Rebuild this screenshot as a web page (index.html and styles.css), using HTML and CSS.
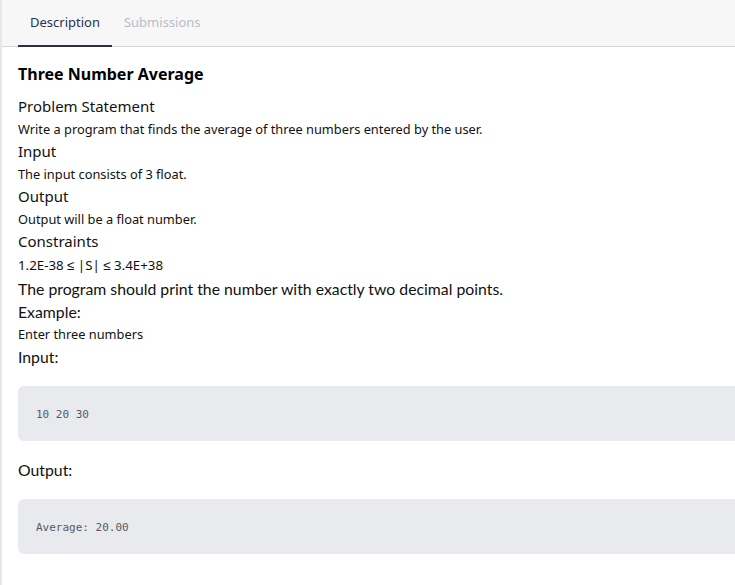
FILE: index.html
```html
<!DOCTYPE html>
<html>
<head>
<meta charset="utf-8">
<link rel="stylesheet" href="styles.css">
</head>
<body>
<div class="panel">
  <div class="tabs">
    <div class="tab active">Description</div>
    <div class="tab">Submissions</div>
  </div>
  <div class="content">
    <h1 class="title">Three Number Average</h1>
    <div class="h">Problem Statement</div>
    <div class="p">Write a program that finds the average of three numbers entered by the user.</div>
    <div class="h">Input</div>
    <div class="p">The input consists of 3 float.</div>
    <div class="h">Output</div>
    <div class="p">Output will be a float number.</div>
    <div class="h">Constraints</div>
    <div class="c">1.2E-38 ≤ |S| ≤ 3.4E+38</div>
    <div class="big">The program should print the number with exactly two decimal points.</div>
    <div class="big">Example:</div>
    <div class="p">Enter three numbers</div>
    <div class="big">Input:</div>
    <pre class="code">10 20 30</pre>
    <div class="big">Output:</div>
    <pre class="code">Average: 20.00</pre>
  </div>
</div>
</body>
</html>
```
FILE: styles.css
```css
html, body {
  margin: 0;
  padding: 0;
  background: #ffffff;
}
body {
  font-family: "Noto Sans", sans-serif;
  color: #111111;
  width: 735px;
  height: 585px;
  overflow: hidden;
}
.panel {
  border-left: 2px solid #e6e6ec;
  min-height: 585px;
  width: 800px;
}
.tabs {
  display: flex;
  height: 47px;
  background: #f7f7f7;
  border-bottom: 1px solid #d3d6db;
  padding-left: 16px;
  box-sizing: border-box;
}
.tab {
  font-family: "Noto Sans", sans-serif;
  font-size: 13px;
  padding: 0 12px 2px;
  display: flex;
  align-items: center;
  color: #b9bdc6;
  box-sizing: border-box;
  border-bottom: 2px solid transparent;
  margin-bottom: -1px;
}
.tab.active {
  color: #2a3350;
  border-bottom-color: #2c2d4a;
}
.content {
  padding: 0 16px;
}
.title {
  font-size: 16px;
  font-weight: 700;
  margin: 0;
  padding-top: 15px;
  line-height: 24px;
  color: #000;
}
.h {
  font-size: 15px;
  line-height: 22.5px;
}
.title + .h {
  margin-top: 9px;
}
.p {
  font-size: 12.8px;
  line-height: 22.5px;
}
.c {
  font-size: 13.3px;
  line-height: 24px;
}
.big {
  font-family: "Lato", sans-serif;
  font-size: 15.8px;
  line-height: 23px;
}
.code {
  margin: 18px 0 17px;
  background: #e9eaee;
  border-radius: 6px;
  padding: 21px 18px 19px;
  font-family: "DejaVu Sans Mono", monospace;
  font-size: 11px;
  line-height: 15px;
  color: #555a63;
}
```
